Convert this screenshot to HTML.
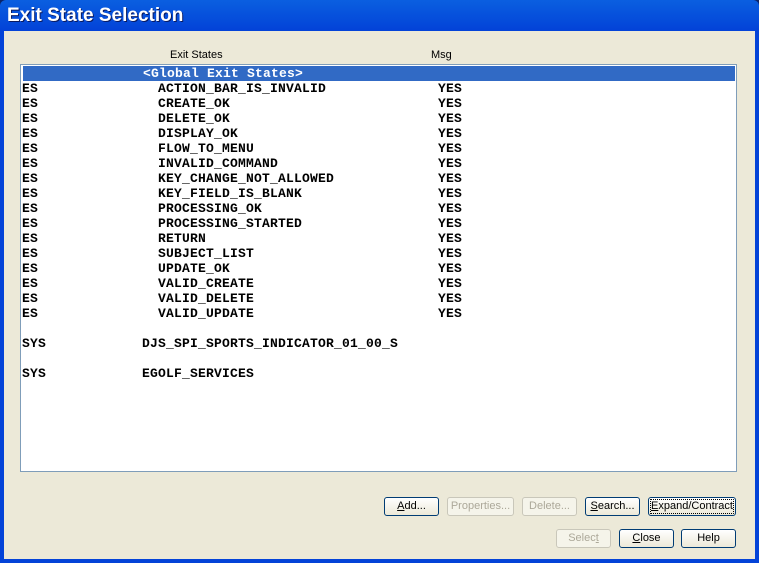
<!DOCTYPE html>
<html><head><style>
body{margin:0;width:759px;height:563px;overflow:hidden;background:#0a246a;font-family:"Liberation Sans",sans-serif}
.win{position:absolute;left:0;top:0;width:759px;height:563px;background:linear-gradient(#0a5fe0,#0343d8 30px);border-radius:6px 6px 0 0}
.title{position:absolute;left:7px;top:5px;color:#fff;font-weight:bold;font-size:19px;text-shadow:1px 1px #0a1a60}
.client{position:absolute;left:4px;top:31px;width:751px;height:528px;background:#ece9d8}
.hdr{position:absolute;font-size:11px;color:#000;top:49px}
.list{position:absolute;left:20px;top:64px;width:715px;height:406px;background:#fff;border:1px solid #7f9db9}
.row{position:absolute;height:15px;font-family:"Liberation Mono",monospace;font-weight:bold;font-size:13px;line-height:15px;white-space:pre;color:#000;letter-spacing:0.2px}
.sel{left:2px;width:712px;background:#316ac5;color:#fff}
.btn{position:absolute;height:17px;border:1px solid #003c74;border-radius:3px;background:linear-gradient(#fff,#ece9d8);font-size:11px;text-align:center;line-height:17px;color:#000}
.dis{border-color:#c9c7ba;color:#aca899;background:#f5f4ea}
</style></head><body>
<div class="win"><div class="title">Exit State Selection</div></div>
<div class="client"></div>
<div class="hdr" style="left:170px">Exit States</div>
<div class="hdr" style="left:431px">Msg</div>
<div class="list">
<div class="row sel" style="top:1px"><span style="position:absolute;left:120px">&lt;Global Exit States&gt;</span></div>
</div>
<div id="rows"></div>
<script>
var n=["ACTION_BAR_IS_INVALID","CREATE_OK","DELETE_OK","DISPLAY_OK","FLOW_TO_MENU","INVALID_COMMAND","KEY_CHANGE_NOT_ALLOWED","KEY_FIELD_IS_BLANK","PROCESSING_OK","PROCESSING_STARTED","RETURN","SUBJECT_LIST","UPDATE_OK","VALID_CREATE","VALID_DELETE","VALID_UPDATE"];
var h="";
n.forEach(function(s,i){var y=81+i*15;
h+='<div class="row" style="left:22px;top:'+y+'px">ES</div><div class="row" style="left:158px;top:'+y+'px">'+s+'</div><div class="row" style="left:438px;top:'+y+'px">YES</div>';});
h+='<div class="row" style="left:22px;top:336px">SYS</div><div class="row" style="left:142px;top:336px">DJS_SPI_SPORTS_INDICATOR_01_00_S</div>';
h+='<div class="row" style="left:22px;top:366px">SYS</div><div class="row" style="left:142px;top:366px">EGOLF_SERVICES</div>';
document.getElementById("rows").innerHTML=h;
</script>
<div class="btn" style="left:384px;top:497px;width:53px"><u>A</u>dd...</div>
<div class="btn dis" style="left:447px;top:497px;width:65px">Properties...</div>
<div class="btn dis" style="left:522px;top:497px;width:53px">Delete...</div>
<div class="btn" style="left:585px;top:497px;width:53px"><u>S</u>earch...</div>
<div class="btn" style="left:648px;top:497px;width:86px;outline:1px dotted #000;outline-offset:-3px"><u>E</u>xpand/Contract</div>
<div class="btn dis" style="left:556px;top:529px;width:53px">Selec<u>t</u></div>
<div class="btn" style="left:619px;top:529px;width:53px"><u>C</u>lose</div>
<div class="btn" style="left:681px;top:529px;width:53px">Help</div>
</body></html>
